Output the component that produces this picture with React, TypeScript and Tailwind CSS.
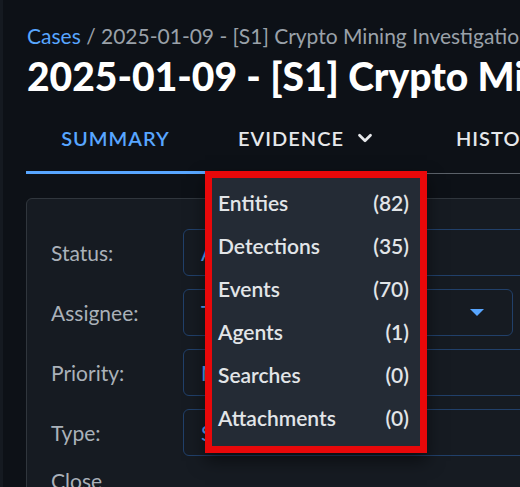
import { ChevronDown } from "lucide-react";

const rows = [
  { label: "Status:", value: "Active", caret: false, wide: true },
  { label: "Assignee:", value: "Tom", caret: true, wide: false },
  { label: "Priority:", value: "Medium", caret: false, wide: true },
  { label: "Type:", value: "Security", caret: false, wide: true },
];

const evidence = [
  { name: "Entities", count: 82 },
  { name: "Detections", count: 35 },
  { name: "Events", count: 70 },
  { name: "Agents", count: 1 },
  { name: "Searches", count: 0 },
  { name: "Attachments", count: 0 },
];

export default function App() {
  return (
    <div
      className="relative w-[520px] h-[487px] overflow-hidden bg-[#0d1117] text-white"
      style={{ fontFamily: "Lato, 'Noto Sans', sans-serif" }}
    >
      {/* left edge strip */}
      <div className="absolute left-0 top-0 bottom-0 w-[3px] bg-[#151a21]" />

      <div className="pl-[27px] pt-[22px] w-[900px]">
        {/* Breadcrumb */}
        <div className="text-[21px] leading-[28px] whitespace-nowrap text-[#9aa1a9]">
          <span className="text-[#58a6ff]">Cases</span> / 2025-01-09 - [S1] Crypto Mining Investigation
        </div>

        {/* Title */}
        <h1 className="mt-[2px] text-[39px] leading-[48px] font-black whitespace-nowrap text-white">
          2025-01-09 - [S1] Crypto Mining Investigation
        </h1>

        {/* Tabs */}
        <div className="flex border-b border-[#5b6169] -ml-[1px]">
          <div className="w-[179px] h-[74px] pt-[26px] flex justify-center border-b-[3px] border-[#58a6ff] -mb-[1px] text-[20px] leading-[24px] font-semibold tracking-[0.05em] text-[#58a6ff]">
            SUMMARY
          </div>
          <div className="w-[204px] h-[73px] pt-[26px] flex justify-center gap-[10px] text-[20px] leading-[24px] font-semibold tracking-[0.05em] text-[#e6e8eb]">
            EVIDENCE
            <ChevronDown size={22} strokeWidth={3} className="text-[#e6e8eb] mt-[1px]" />
          </div>
          <div className="pl-[47px] h-[73px] pt-[26px] text-[20px] leading-[24px] font-semibold tracking-[0.05em] text-[#e6e8eb]">
            HISTORY
          </div>
        </div>

        {/* Summary card */}
        <div className="mt-[24px] -ml-[1px] rounded-tl-[6px] border border-[#30363d] bg-[#161b22] pt-[30px] pl-[24px]">
          <div className="flex flex-col gap-[13px]">
            {rows.map((r) => (
              <div key={r.label} className="flex items-center">
                <div className="w-[132px] text-[21px] text-[#aab1b9]">{r.label}</div>
                <div
                  className={`h-[47px] rounded-[6px] border border-[#21406a] flex items-center pl-[17px] pr-[28px] ${
                    r.wide ? "w-[600px]" : "w-[330px] justify-between"
                  }`}
                >
                  <span className="text-[21px] text-[#58a6ff]">{r.value}</span>
                  {r.caret && (
                    <svg width="14" height="7" viewBox="0 0 14 7">
                      <path d="M0 0 H14 L7 7 Z" fill="#58a6ff" />
                    </svg>
                  )}
                </div>
              </div>
            ))}
            <div className="flex items-start">
              <div className="w-[132px] text-[21px] leading-[24px] text-[#aab1b9]">
                Close
                <br />
                Date:
              </div>
              <div className="pt-[14px] pl-[2px] text-[21px] text-[#aab1b9]">N/A</div>
            </div>
          </div>
        </div>
      </div>

      {/* Evidence dropdown */}
      <div className="absolute left-[205px] top-[171px] w-[222px] h-[282px] border-[7px] border-[#e8080a] bg-[#242b35] shadow-[0_8px_16px_rgba(0,0,0,0.5)] pt-[3px]">
        {evidence.map((e) => (
          <div
            key={e.name}
            className="h-[43px] flex items-center justify-between pl-[6px] pr-[11px] text-[21px] font-semibold text-[#e2e5e8]"
          >
            <span>{e.name}</span>
            <span>({e.count})</span>
          </div>
        ))}
      </div>
    </div>
  );
}
